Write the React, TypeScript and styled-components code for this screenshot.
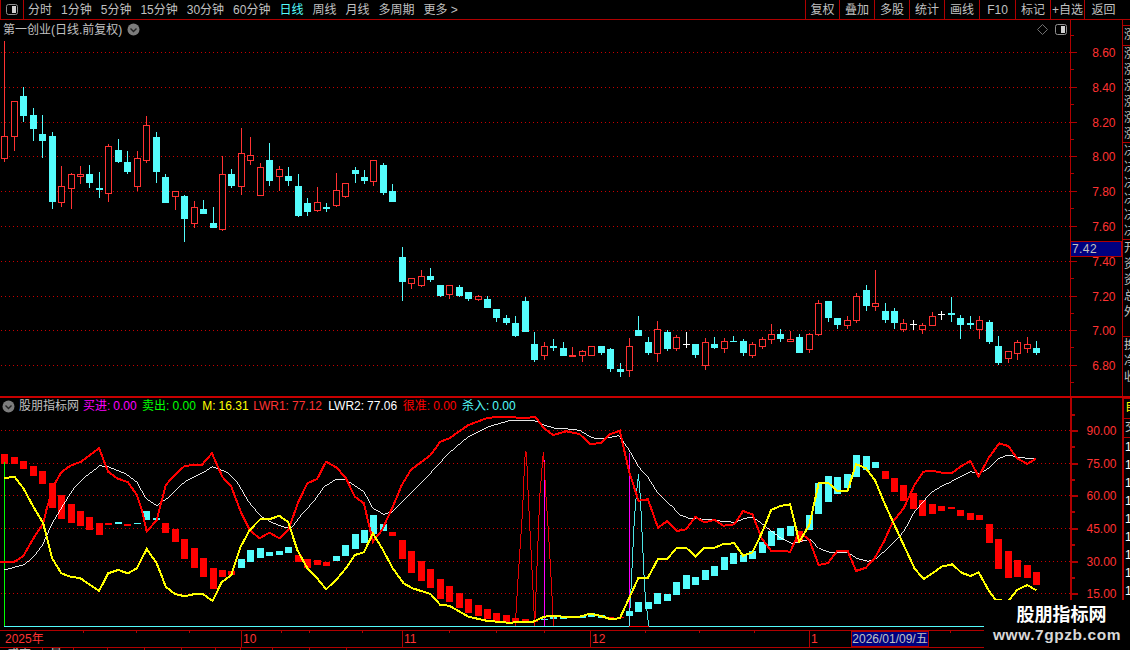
import React from "react";
import styled, { createGlobalStyle } from "styled-components";

const RED = "#ff3232";
const CYAN = "#54fcfc";
const LINE = "#b00000";
const FONT = `"Liberation Sans", "Noto Sans CJK SC", sans-serif`;

const Global = createGlobalStyle`
  html, body { margin: 0; padding: 0; background: #000; }
`;

const Page = styled.div`
  width: 1130px;
  height: 650px;
  background: #000;
  display: flex;
  flex-direction: column;
  position: relative;
  overflow: hidden;
  font: 12px/1 ${FONT};
  color: #c0c0c0;
`;

const Toolbar = styled.div`
  height: 20px;
  flex: none;
  box-sizing: border-box;
  border-bottom: 1px solid ${LINE};
  display: flex;
  align-items: stretch;
`;
const ToggleCell = styled.div`
  width: 24px;
  box-sizing: border-box;
  border-left: 1px solid ${LINE};
  border-right: 1px solid ${LINE};
  display: flex;
  align-items: center;
  justify-content: center;
`;
const Periods = styled.div`
  flex: 1;
  display: flex;
  align-items: center;
  gap: 9px;
  padding-left: 4px;
`;
const Period = styled.span<{ $active?: boolean }>`
  color: ${(p) => (p.$active ? CYAN : "#c0c0c0")};
  font-size: 12px;
  white-space: nowrap;
`;
const Actions = styled.div`
  display: flex;
  align-items: stretch;
  margin-right: 8px;
`;
const Action = styled.div<{ $w: number }>`
  width: ${(p) => p.$w}px;
  box-sizing: border-box;
  border-left: 1px solid ${LINE};
  display: flex;
  align-items: center;
  justify-content: center;
  font-size: 12px;
  white-space: nowrap;
`;

const Panel = styled.div<{ $h: number; $thick?: boolean }>`
  height: ${(p) => p.$h}px;
  flex: none;
  display: flex;
`;
const Divider = styled.div`
  height: 2px;
  flex: none;
  background: #c80000;
`;
const Plot = styled.div`
  width: 1070px;
  flex: none;
  position: relative;
`;
const Chart = styled.svg`
  display: block;
`;
const AxisBox = styled.div<{ $thick?: boolean }>`
  width: 52px;
  flex: none;
  position: relative;
  box-sizing: border-box;
  border-left: ${(p) => (p.$thick ? 2 : 1)}px solid ${LINE};
`;
const AxisSvg = styled.svg`
  display: block;
  margin-left: -2px;
  overflow: hidden;
`;
const PriceTag = styled.div`
  position: absolute;
  left: -1px;
  top: 221px;
  width: 52px;
  height: 16px;
  box-sizing: border-box;
  background: #000080;
  border: 1px solid ${LINE};
  color: #c0c0c0;
  font-size: 12px;
  line-height: 15px;
  padding-left: 1px;
  letter-spacing: 0.4px;
`;
const Title = styled.div`
  position: absolute;
  left: 3px;
  top: 3px;
  display: flex;
  align-items: center;
  gap: 5px;
  white-space: nowrap;
`;
const CornerIcons = styled.div`
  position: absolute;
  right: 3px;
  top: 4px;
  display: flex;
  align-items: center;
  gap: 7px;
`;
const Legend = styled.div`
  position: absolute;
  left: 2px;
  top: 1px;
  display: flex;
  align-items: center;
  white-space: nowrap;
  height: 14px;
`;
const LegendName = styled.span`
  margin: 0 4px 0 4px;
`;
const LegendItem = styled.span<{ $c: string; $mr: number }>`
  color: ${(p) => p.$c};
  margin-right: ${(p) => p.$mr}px;
  display: inline-flex;
  gap: 3px;
`;

const Side = styled.div<{ $thick?: boolean }>`
  width: 8px;
  flex: none;
  box-sizing: border-box;
  border-left: ${(p) => (p.$thick ? 2 : 1)}px solid ${LINE};
  overflow: hidden;
  display: flex;
  flex-direction: column;
`;
const SideGap = styled.div<{ $h: number }>`
  height: ${(p) => p.$h}px;
  flex: none;
`;
const SideSection = styled.div<{ $h: number; $c?: string; $row?: number }>`
  height: ${(p) => p.$h}px;
  flex: none;
  box-sizing: border-box;
  border-top: 1px solid ${LINE};
  color: ${(p) => p.$c || "#c0c0c0"};
  padding-left: 1px;
  overflow: hidden;
  & > div {
    height: ${(p) => p.$row || 16}px;
    line-height: ${(p) => p.$row || 16}px;
    white-space: nowrap;
  }
`;

const TimeRow = styled.div`
  height: 18px;
  flex: none;
  position: relative;
  box-sizing: border-box;
  border-top: 1px solid ${LINE};
  border-bottom: 1px solid ${LINE};
`;
const DateBox = styled.div`
  position: absolute;
  left: 851px;
  top: 0;
  width: 78px;
  height: 16px;
  box-sizing: border-box;
  background: #000080;
  border: 1px solid ${LINE};
  color: #c0c0c0;
  font-size: 12px;
  line-height: 14px;
  text-align: center;
  white-space: nowrap;
`;
const Footer = styled.div`
  height: 2px;
  flex: none;
  overflow: hidden;
  display: flex;
  color: #c0c0c0;
  font-size: 12px;
  line-height: 12px;
  white-space: nowrap;
`;
const FooterCell = styled.span<{ $w: number }>`
  width: ${(p) => p.$w}px;
  flex: none;
  box-sizing: border-box;
  padding-left: 7px;
  border-right: 1px solid ${LINE};
`;

const Watermark = styled.div`
  position: absolute;
  left: 984px;
  top: 600px;
  width: 146px;
  height: 50px;
  background: #000;
  display: flex;
  flex-direction: column;
  align-items: center;
  padding-top: 5px;
  box-sizing: border-box;
`;
const WmTitle = styled.div`
  color: #fff;
  font-size: 18px;
  line-height: 20px;
  font-weight: 700;
  margin-left: 9px;
`;
const WmUrl = styled.div`
  color: #d8d8d8;
  font-size: 15.5px;
  line-height: 18px;
  margin-top: 1px;
  letter-spacing: 0.55px;
  font-weight: 700;
  white-space: nowrap;
`;

type CT = "R" | "C" | "W";
type Candle = [CT, number, number, number, number];

const first: Candle[] = [
  ["R", 122, 409, 476, 486], ["R", 304, 304, 410, 453], ["C", 262, 288, 348, 366], ["C", 324, 345, 387, 422],
  ["C", 345, 402, 423, 474], ["C", 396, 408, 606, 627], ["R", 498, 559, 608, 621], ["R", 520, 523, 566, 627],
  ["R", 498, 523, 530, 552], ["C", 495, 522, 549, 564], ["C", 516, 564, 570, 594], ["R", 432, 439, 581, 606],
  ["C", 417, 450, 486, 489], ["C", 453, 486, 516, 522], ["R", 453, 475, 560, 574], ["R", 348, 376, 483, 489],
  ["C", 396, 411, 516, 549], ["C", 522, 531, 609, 609], ["R", 574, 574, 590, 630], ["C", 586, 588, 657, 726],
  ["R", 603, 622, 671, 684], ["C", 600, 627, 642, 642], ["C", 621, 669, 684, 684], ["R", 468, 523, 690, 693],
  ["C", 507, 522, 558, 564], ["R", 384, 460, 560, 585], ["R", 411, 466, 482, 495], ["R", 489, 502, 587, 587],
  ["C", 429, 480, 543, 558], ["R", 498, 508, 530, 573], ["C", 501, 528, 543, 558], ["C", 522, 558, 648, 651],
  ["C", 594, 609, 636, 648], ["R", 561, 607, 633, 636], ["C", 609, 621, 627, 636], ["R", 519, 571, 617, 621],
  ["R", 550, 550, 590, 594], ["C", 501, 510, 522, 549], ["C", 510, 531, 543, 552], ["R", 480, 481, 545, 558],
  ["C", 489, 495, 579, 585], ["C", 552, 573, 606, 606],
];
const second: Candle[] = [
  ["C", 81, 111, 186, 243], ["R", 174, 174, 192, 207], ["R", 150, 168, 198, 201], ["C", 144, 168, 180, 186],
  ["C", 195, 195, 228, 231], ["R", 195, 195, 225, 237], ["C", 195, 201, 228, 231], ["C", 216, 216, 237, 243],
  ["R", 225, 228, 240, 243], ["C", 228, 237, 264, 264], ["C", 267, 267, 294, 306], ["C", 285, 294, 309, 315],
  ["C", 288, 309, 348, 351], ["C", 231, 243, 336, 336], ["C", 336, 372, 420, 426], ["R", 366, 378, 408, 420],
  ["C", 357, 378, 384, 393], ["C", 366, 384, 408, 408],
  ["R", 381, 405, 411, 412], ["R", 390, 393, 407, 426], ["R", 378, 378, 407, 407], ["C", 378, 378, 399, 405],
  ["C", 384, 387, 447, 456], ["C", 429, 447, 456, 471], ["R", 354, 378, 452, 471], ["C", 288, 330, 348, 348],
  ["C", 351, 366, 399, 405], ["R", 303, 328, 401, 426], ["C", 330, 336, 387, 393], ["R", 345, 351, 387, 393],
  ["W", 336, 372, 373, 384], ["C", 372, 372, 405, 414], ["R", 354, 366, 438, 450], ["C", 351, 372, 384, 387],
  ["R", 354, 363, 387, 399], ["C", 348, 363, 366, 366], ["C", 357, 363, 399, 408], ["R", 366, 372, 408, 414],
  ["R", 351, 357, 381, 387], ["R", 312, 342, 359, 372], ["C", 327, 342, 357, 366], ["R", 333, 357, 366, 366],
  ["C", 342, 351, 399, 399], ["R", 339, 342, 389, 399], ["R", 240, 249, 345, 348], ["C", 243, 243, 294, 306],
  ["C", 294, 294, 315, 327], ["R", 288, 300, 317, 327], ["R", 219, 228, 303, 309], ["C", 195, 210, 258, 273],
  ["R", 150, 249, 261, 273], ["C", 249, 273, 300, 309], ["C", 264, 273, 309, 327], ["R", 297, 309, 330, 336],
  ["W", 300, 312, 313, 330], ["R", 309, 315, 330, 342], ["R", 276, 288, 318, 318], ["W", 273, 282, 283, 300],
  ["C", 231, 279, 285, 306], ["C", 285, 294, 315, 357], ["C", 288, 309, 315, 327], ["R", 288, 300, 330, 357],
  ["C", 300, 306, 366, 372], ["C", 348, 378, 429, 435], ["R", 393, 393, 417, 429], ["R", 360, 366, 401, 420],
  ["R", 351, 372, 387, 399], ["C", 363, 384, 399, 405],
];
const candles: Candle[] = [
  ...first,
  ...second.map((c): Candle => [c[0], c[1] + 660, c[2] + 660, c[3] + 660, c[4] + 660]),
];

type Bar = [CT, number, number];
const bars: Bar[] = [
  ["R", 177, 207], ["R", 186, 207], ["R", 198, 222], ["R", 213, 243], ["R", 228, 267], ["R", 264, 339],
  ["R", 300, 372], ["R", 327, 384], ["R", 348, 393], ["R", 366, 405], ["R", 384, 420], ["R", 384, 390],
  ["C", 381, 387], ["R", 387, 393], ["C", 384, 387], ["C", 348, 375], ["C", 369, 375], ["R", 384, 414],
  ["R", 402, 441], ["R", 432, 492], ["R", 459, 519], ["R", 489, 546], ["R", 519, 582], ["R", 525, 546],
  ["R", 528, 540], ["C", 492, 519], ["C", 465, 501], ["C", 459, 489], ["C", 471, 484], ["C", 468, 480],
  ["C", 456, 474], ["R", 480, 501], ["R", 492, 519], ["R", 495, 510], ["R", 501, 513], ["C", 483, 498],
  ["C", 450, 483], ["C", 417, 462], ["C", 405, 444], ["C", 360, 417], ["C", 387, 408], ["R", 411, 423],
  ["R", 435, 492], ["R", 468, 534], ["R", 498, 558], ["R", 522, 579], ["R", 552, 612], ["R", 573, 621],
  ["R", 594, 639], ["R", 612, 654], ["R", 630, 663], ["R", 642, 672], ["R", 654, 678], ["R", 660, 681],
  ["R", 669, 681], ["R", 672, 681], ["R", 678, 681], ["C", 672, 675], ["C", 666, 672], ["C", 666, 672],
  ["C", 664, 670], ["C", 664, 668], ["C", 655, 665], ["C", 660, 668], ["R", 665, 670], ["R", 665, 670],
  ["C", 648, 663], ["C", 621, 651], ["C", 621, 642], ["C", 594, 627], ["C", 597, 618], ["C", 561, 600],
  ["C", 540, 582], ["C", 546, 570], ["C", 525, 555], ["C", 513, 543], ["C", 486, 525], ["C", 474, 507],
  ["C", 480, 501], ["C", 468, 492], ["C", 441, 474], ["C", 408, 453], ["C", 399, 435], ["C", 393, 423],
  ["R", 408, 441], ["C", 360, 405], ["C", 264, 357], ["C", 243, 321], ["C", 246, 297], ["C", 237, 280],
  ["C", 180, 246], ["C", 183, 225], ["C", 201, 219], ["R", 228, 252], ["R", 249, 291], ["R", 270, 318],
  ["R", 294, 342], ["R", 315, 363], ["R", 327, 357], ["R", 333, 348], ["R", 336, 342], ["R", 345, 363],
  ["R", 354, 375], ["R", 360, 375], ["R", 387, 444], ["R", 432, 522], ["R", 468, 549], ["R", 495, 546],
  ["R", 510, 549], ["R", 531, 570],
];

type P = [number, number];
const KX = 1568 / 565;
const toPts = (a: P[], b: P[] = []) =>
  [
    ...a.map(([x, y]) => `${(x / KX).toFixed(1)},${(y / 3 + 395).toFixed(1)}`),
    ...b.map(([x, y]) => `${(x / KX + 565).toFixed(1)},${(y / 3 + 395).toFixed(1)}`),
  ].join(" ");

const lwr1 = toPts(
  [[0,500],[40,500],[65,483],[90,435],[120,385],[130,340],[150,270],[170,232],[195,212],[225,200],[275,160],[300,230],[325,250],[355,262],[380,300],[395,350],[407,410],[435,375],[460,270],[485,240],[513,212],[560,210],[588,175],[617,245],[642,275],[668,350],[693,405],[720,430],[748,413],[775,430],[800,405],[828,320],[853,265],[880,252],[905,200],[935,218],[960,250],[985,305],[1010,325],[1035,440],[1060,405],[1090,335],[1115,270],[1140,225],[1195,180],[1222,140],[1247,130],[1300,90],[1355,68],[1410,65],[1455,70],[1485,65],[1510,100],[1535,120],[1568,110]],
  [[0,108],[40,117],[70,147],[100,144],[125,118],[152,107],[178,230],[204,317],[230,313],[258,398],[284,378],[310,408],[336,403],[362,365],[386,382],[415,375],[440,392],[470,388],[494,348],[520,358],[546,430],[572,467],[598,468],[625,470],[650,410],[678,435],[704,510],[730,504],[756,467],[784,467],[808,528],[835,518],[860,488],[885,440],[910,380],[940,340],[970,270],[995,230],[1020,227],[1045,233],[1075,233],[1100,213],[1125,198],[1148,245],[1175,190],[1205,145],[1230,153],[1255,190],[1283,207],[1308,190]]
);
const lwr2 = toPts(
  [[10,525],[65,510],[90,490],[118,450],[145,385],[175,330],[205,280],[240,240],[275,212],[300,215],[350,237],[380,262],[405,310],[435,332],[470,305],[515,258],[560,235],[590,215],[630,232],[660,265],[690,320],[725,365],[760,385],[790,397],[810,397],[840,355],[870,320],[900,275],[930,255],[960,254],[1010,290],[1035,340],[1065,358],[1090,350],[1140,295],[1190,240],[1245,175],[1300,125],[1355,95],[1420,75],[1480,75],[1510,90],[1540,100],[1568,102]],
  [[0,101],[40,106],[75,128],[100,132],[150,122],[178,165],[204,215],[230,247],[258,295],[290,330],[320,360],[345,370],[390,373],[430,378],[470,382],[500,370],[520,366],[545,385],[575,410],[600,430],[630,445],[680,433],[704,460],[735,472],[785,472],[810,490],[840,499],[865,490],[905,450],[940,410],[970,350],[1020,288],[1045,272],[1075,258],[1125,230],[1150,236],[1175,220],[1205,190],[1230,180],[1255,186],[1283,190],[1308,190]]
);
const mLine = toPts(
  [[12,250],[40,245],[65,280],[90,330],[120,385],[145,490],[170,535],[195,545],[222,549],[275,588],[300,535],[328,525],[355,535],[380,520],[407,462],[435,505],[460,575],[485,597],[513,604],[540,597],[563,597],[590,618],[615,562],[642,540],[668,455],[693,405],[722,373],[748,373],[775,362],[800,382],[825,465],[853,520],[880,550],[905,583],[935,552],[960,520],[985,480],[1010,472],[1035,415],[1060,460],[1090,520],[1120,565],[1145,580],[1195,597],[1222,630],[1247,632],[1300,665],[1350,677],[1410,683],[1480,680],[1510,665],[1540,662],[1568,666]],
  [[0,666],[40,665],[70,656],[100,663],[125,672],[152,670],[178,610],[204,548],[230,548],[258,492],[284,492],[310,458],[336,458],[362,484],[386,458],[415,458],[440,447],[470,445],[494,482],[520,472],[546,415],[572,345],[598,333],[625,328],[650,440],[678,390],[704,265],[730,263],[756,288],[784,288],[808,207],[835,220],[860,255],[885,320],[910,380],[940,450],[970,520],[995,552],[1020,535],[1045,515],[1075,508],[1100,533],[1125,543],[1148,532],[1175,585],[1195,615],[1230,618],[1255,585],[1283,570],[1308,586]]
);
const spike1 = toPts([[1430,692],[1437,560],[1444,450],[1450,350],[1456,200],[1458,170],[1461,170],[1466,300],[1472,430],[1478,560],[1484,692],[1498,300],[1508,170],[1515,300],[1523,430],[1530,560],[1536,692]]);
const spike2 = toPts([], [[178,693],[185,540],[192,380],[198,300],[204,238],[209,305],[215,440],[221,580],[232,693]]);

const xAt = (i: number) => Math.round(4.3 + 9.465 * i);
const px = (v: number) => Math.round(v / 3);

const mainGrid = [52, 87, 122, 156, 191, 226, 261, 296, 330, 365];
const mainLabels = ["8.60", "8.40", "8.20", "8.00", "7.80", "7.60", "7.40", "7.20", "7.00", "6.80"];
const indGrid = [430, 463, 495, 528, 561, 593];
const indLabels = ["90.00", "75.00", "60.00", "45.00", "30.00", "15.00"];

const GridLines = ({ ys }: { ys: number[] }) => (
  <g stroke="#c80000" strokeDasharray="1 3" shapeRendering="crispEdges">
    {ys.map((y) => (
      <line key={y} x1={1} x2={1070} y1={y + 0.5} y2={y + 0.5} />
    ))}
  </g>
);

const CandleMark = ({ c, i }: { c: Candle; i: number }) => {
  const [t, wt, bt, bb, wb] = c;
  const x = xAt(i);
  const color = t === "R" ? RED : t === "C" ? CYAN : "#fff";
  const top = px(bt);
  const h = Math.max(px(bb) - top, 1);
  return (
    <g shapeRendering="crispEdges">
      <rect x={x} y={px(wt)} width={1} height={Math.max(px(wb) - px(wt), 1)} fill={color} />
      {t === "R" ? (
        <rect x={x - 2.5} y={top + 0.5} width={6} height={Math.max(h - 1, 1)} fill="#000" stroke={color} />
      ) : (
        <rect x={x - 3} y={top} width={7} height={h} fill={color} />
      )}
    </g>
  );
};

const Axis = ({ ys, labels, y0, h, thick, step }: { ys: number[]; labels: string[]; y0: number; h: number; thick?: boolean; step: number }) => {
  const minor = ys.map((y) => y + step);
  minor.unshift(ys[0] - step);
  return (
    <AxisSvg width={53} height={h} viewBox={`1069 ${y0} 53 ${h}`}>
      <g fill={LINE} shapeRendering="crispEdges">
        {ys.map((y) => (
          <rect key={y} x={1070} y={y} width={7} height={thick ? 2 : 1} />
        ))}
        {minor.map((y) => (
          <rect key={y} x={1070} y={y} width={4} height={thick ? 2 : 1} />
        ))}
      </g>
      <g fill={RED} fontFamily={FONT} fontSize={12} textAnchor="end">
        {labels.map((l, i) => (
          <text key={l} x={1115.5} y={ys[i] + 5}>
            {l}
          </text>
        ))}
      </g>
    </AxisSvg>
  );
};

const Chevron = () => (
  <svg width={13} height={13} viewBox="0 0 13 13">
    <circle cx={6.5} cy={6.5} r={6} fill="#7c7c7c" />
    <path d="M3.5 5.5 L6.5 8.5 L9.5 5.5" fill="none" stroke="#222" strokeWidth={1.4} />
  </svg>
);
const ToggleIcon = () => (
  <svg width={12} height={11} viewBox="0 0 12 11">
    <rect x={0.5} y={0.5} width={11} height={10} rx={2} fill="none" stroke="#909090" />
    <rect x={6} y={2} width={4} height={7} fill="#d0d0d0" />
  </svg>
);
const Diamond = () => (
  <svg width={11} height={11} viewBox="0 0 11 11">
    <path d="M5.5 0.5 L10.5 5.5 L5.5 10.5 L0.5 5.5 Z" fill="none" stroke="#707070" />
  </svg>
);

const minorTime = [83, 136, 189, 281, 309, 362, 449, 496, 544, 645, 699, 754, 950];
const majorTime: [number, string][] = [[0, "2025年"], [241, "10"], [402, "11"], [590, "12"], [809, "1"]];

const periods = ["分时", "1分钟", "5分钟", "15分钟", "30分钟", "60分钟", "日线", "周线", "月线", "多周期", "更多 >"];
const actions: [string, number][] = [["复权", 34], ["叠加", 35], ["多股", 35], ["统计", 35], ["画线", 35], ["F10", 36], ["标记", 35], ["+自选", 34], ["返回", 38]];

const legend: [string, string, string, number][] = [
  ["买进:", "0.00", "#ff00ff", 5.4],
  ["卖出:", "0.00", "#00ff00", 6.4],
  ["M:", "16.31", "#ffff00", 4.6],
  ["LWR1:", "77.12", RED, 6.3],
  ["LWR2:", "77.06", "#ffffff", 5.7],
  ["很准:", "0.00", "#ff0000", 5.4],
  ["杀入:", "0.00", CYAN, 0],
];

const rows = (s: string) => s.split("").map((ch, i) => <div key={i}>{ch}</div>);

export default function App() {
  return (
    <Page>
      <Global />
      <Toolbar>
        <ToggleCell>
          <ToggleIcon />
        </ToggleCell>
        <Periods>
          {periods.map((p) => (
            <Period key={p} $active={p === "日线"}>
              {p}
            </Period>
          ))}
        </Periods>
        <Actions>
          {actions.map(([a, w]) => (
            <Action key={a} $w={w}>
              {a}
            </Action>
          ))}
        </Actions>
      </Toolbar>

      <Panel $h={376}>
        <Plot>
          <Chart width={1070} height={376} viewBox="0 20 1070 376">
            <GridLines ys={mainGrid} />
            {candles.map((c, i) => (
              <CandleMark key={i} c={c} i={i} />
            ))}
          </Chart>
          <Title>
            第一创业(日线.前复权)
            <Chevron />
          </Title>
          <CornerIcons>
            <Diamond />
            <ToggleIcon />
          </CornerIcons>
        </Plot>
        <AxisBox>
          <Axis ys={mainGrid} labels={mainLabels} y0={20} h={376} step={17} />
          <PriceTag>7.42</PriceTag>
        </AxisBox>
        <Side>
          <SideGap $h={5} />
          <SideSection $h={20} $row={18}>{rows("涨")}</SideSection>
          <SideSection $h={97}>{rows("涨涨涨涨涨涨")}</SideSection>
          <SideSection $h={97}>{rows("决决决决决决")}</SideSection>
          <SideSection $h={97}>{rows("开资资总外")}</SideSection>
          <SideSection $h={60}>{rows("换净收")}</SideSection>
        </Side>
      </Panel>
      <Divider />

      <Panel $h={232}>
        <Plot>
          <Chart width={1070} height={232} viewBox="0 398 1070 232">
            <GridLines ys={indGrid} />
            <g shapeRendering="crispEdges">
              {bars.map(([t, top, bottom], i) => (
                <rect
                  key={i}
                  x={xAt(i) - 3}
                  y={px(top) + 395}
                  width={7}
                  height={Math.max(px(bottom) - px(top), 1)}
                  fill={t === "R" ? "#ff0000" : CYAN}
                />
              ))}
              <rect x={4} y={462} width={1} height={164} fill="#00ff00" />
              <rect x={4} y={626} width={980} height={1} fill={CYAN} />
              <rect x={629} y={626} width={20} height={1} fill="#ff0000" />
              <rect x={544} y={460} width={1} height={166} fill="#ff00ff" />
              <rect x={629} y={453} width={1} height={173} fill="#ff00ff" />
              <polyline points={spike1} fill="none" stroke="#ff0000" strokeWidth={0.9} />
              <polyline points={spike2} fill="none" stroke={CYAN} strokeWidth={0.9} />
              <polyline points={lwr2} fill="none" stroke="#ffffff" strokeWidth={0.9} />
              <polyline points={lwr1} fill="none" stroke="#ff0000" strokeWidth={2} />
              <polyline points={mLine} fill="none" stroke="#ffff00" strokeWidth={2} />
            </g>
          </Chart>
          <Legend>
            <Chevron />
            <LegendName>股朋指标网</LegendName>
            {legend.map(([k, v, c, mr]) => (
              <LegendItem key={k} $c={c} $mr={mr}>
                <span>{k}</span>
                <span>{v}</span>
              </LegendItem>
            ))}
          </Legend>
        </Plot>
        <AxisBox $thick>
          <Axis ys={indGrid} labels={indLabels} y0={398} h={232} thick step={16} />
        </AxisBox>
        <Side $thick>
          <SideSection $h={20} $c="#ffff00">{rows("自")}</SideSection>
          <SideSection $h={19}>{rows("交")}</SideSection>
          <SideSection $h={193} $c="#ffffff" $row={18}>{rows("111111111")}</SideSection>
        </Side>
      </Panel>

      <TimeRow>
        <Chart width={1130} height={16} viewBox="0 631 1130 16">
          <g fill={LINE} shapeRendering="crispEdges">
            {minorTime.map((x) => (
              <rect key={x} x={x} y={631} width={1} height={2} />
            ))}
            {majorTime.slice(1).map(([x]) => (
              <rect key={x} x={x} y={631} width={1} height={16} />
            ))}
          </g>
          <g fill={RED} fontFamily={FONT} fontSize={12}>
            {majorTime.map(([x, l]) => (
              <text key={l} x={x === 0 ? 5 : x + 2} y={643}>
                {l}
              </text>
            ))}
          </g>
        </Chart>
        <DateBox>2026/01/09/五</DateBox>
      </TimeRow>
      <Footer>
        <FooterCell $w={43}>成交</FooterCell>
        <FooterCell $w={31}>量</FooterCell>
        <FooterCell $w={34} />
        <FooterCell $w={37} />
        <FooterCell $w={37} />
        <FooterCell $w={34} />
        <FooterCell $w={25} />
        <FooterCell $w={32} />
        <FooterCell $w={37} />
        <FooterCell $w={37} />
      </Footer>

      <Watermark>
        <WmTitle>股朋指标网</WmTitle>
        <WmUrl>www.7gpzb.com</WmUrl>
      </Watermark>
    </Page>
  );
}
